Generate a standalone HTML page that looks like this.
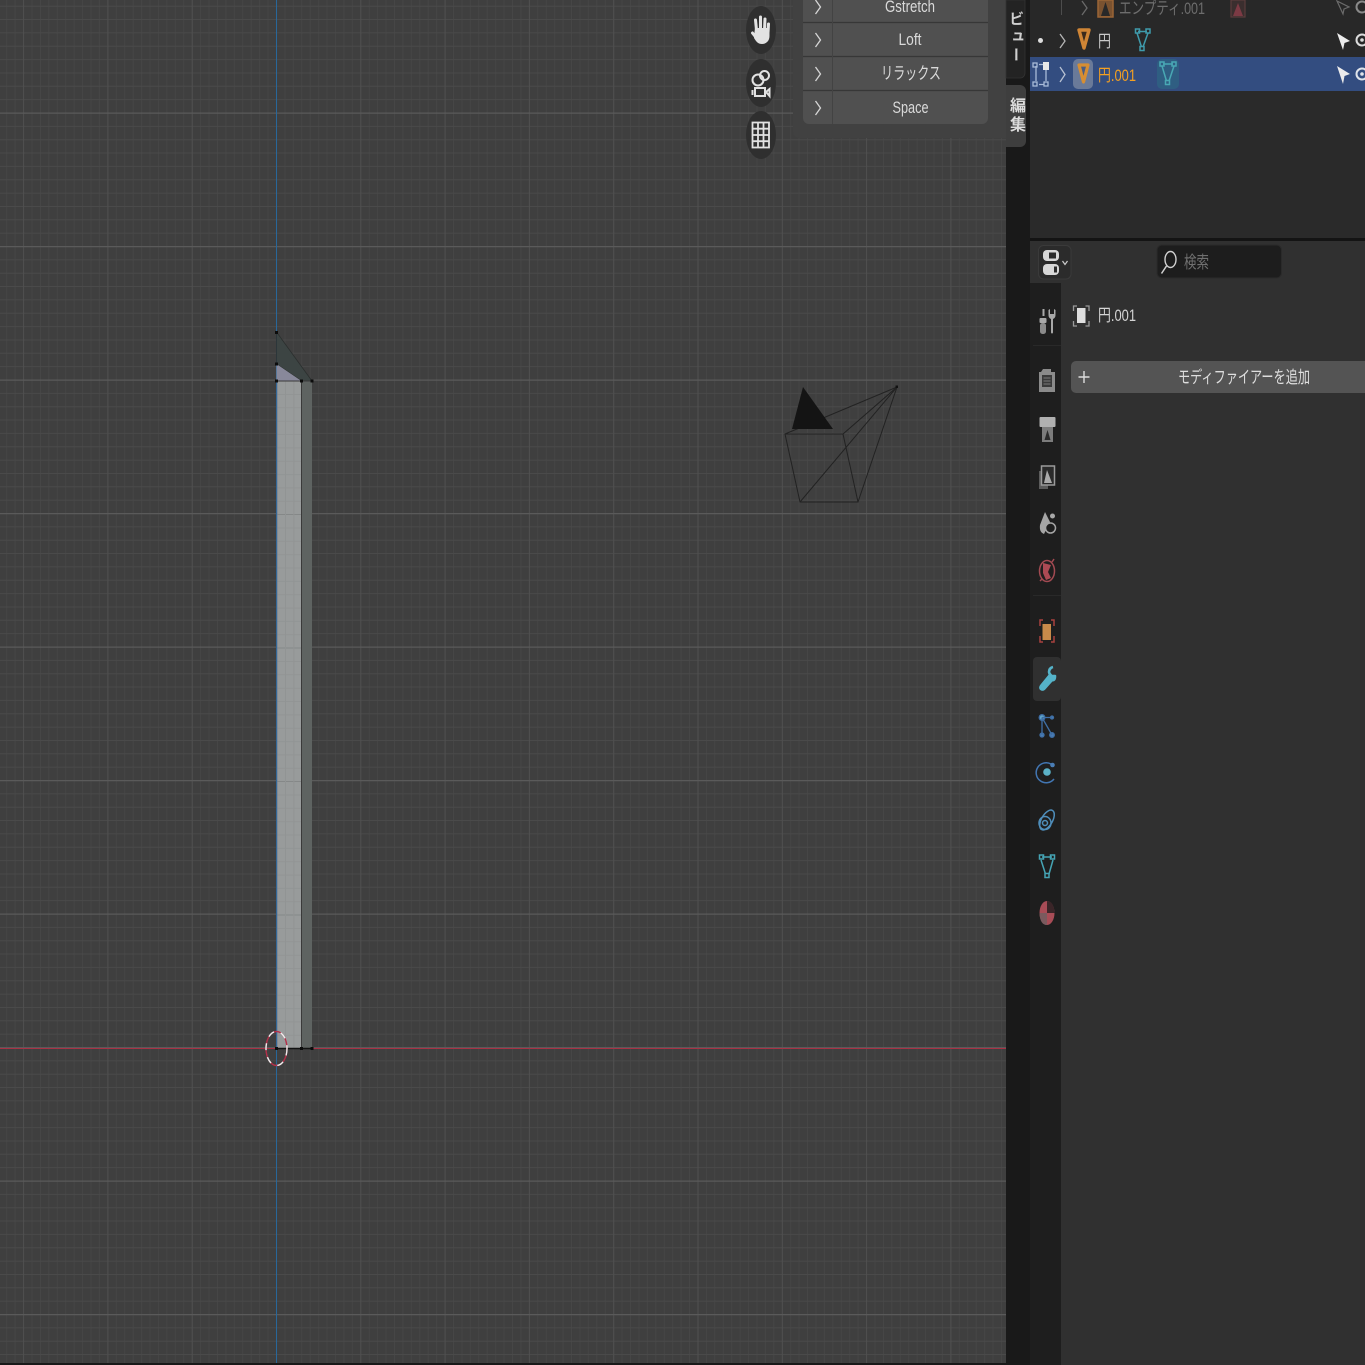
<!DOCTYPE html>
<html><head><meta charset="utf-8"><style>
html,body{margin:0;padding:0;background:#181818;width:1365px;height:1365px;overflow:hidden}
svg{display:block;filter:blur(.35px)}
text{font-family:"Liberation Sans","Noto Sans CJK JP",sans-serif;font-size:17px;fill:#dadada}
</style></head><body>
<svg width="1365" height="1365" viewBox="0 0 1365 1365" xmlns="http://www.w3.org/2000/svg">
<rect width="1365" height="1365" fill="#191919"/>
<!-- viewport -->
<rect width="1006" height="1363" fill="#3f3f3f"/>
<path d="M6.2 681.5H1006" stroke="#464646" stroke-width="1363" stroke-dasharray="1 7.43" fill="none"/>
<path d="M503 5.7V1363" stroke="#4a4a4a" stroke-width="1006" stroke-dasharray="1 12.35" fill="none"/>
<path d="M23.1 681.5H1006" stroke="#505050" stroke-width="1363" stroke-dasharray="1 83.3" fill="none"/>
<path d="M503 112.5V1363" stroke="#5a5a5a" stroke-width="1006" stroke-dasharray="1.200 132.300" fill="none"/>
<!-- axes -->
<path d="M276.500 0V1363" stroke="#28679a" stroke-width="1"/>
<path d="M0 1048.500H1006" stroke="#a83145" stroke-width="1"/>
<!-- object -->
<rect x="277" y="381" width="24.500" height="667" fill="#989b9b"/>
<rect x="301.500" y="381" width="10.500" height="667" fill="#5e6361"/>
<path d="M277 381V1048" stroke="#4d6a94" stroke-width="1" opacity=".6"/>
<path d="M277.500 394.500H301M277.500 407.800H301M277.500 421.200H301M277.500 434.500H301M277.500 447.900H301M277.500 461.200H301M277.500 474.600H301M277.500 487.900H301M277.500 501.300H301M277.500 528H301M277.500 541.300H301M277.500 554.700H301M277.500 568H301M277.500 581.400H301M277.500 594.700H301M277.500 608.100H301M277.500 621.400H301M277.500 634.800H301M277.500 661.500H301M277.500 674.800H301M277.500 688.200H301M277.500 701.500H301M277.500 714.900H301M277.500 728.200H301M277.500 741.600H301M277.500 754.900H301M277.500 768.300H301M277.500 795H301M277.500 808.300H301M277.500 821.700H301M277.500 835H301M277.500 848.400H301M277.500 861.700H301M277.500 875.100H301M277.500 888.400H301M277.500 901.800H301M277.500 928.500H301M277.500 941.800H301M277.500 955.200H301M277.500 968.500H301M277.500 981.900H301M277.500 995.200H301M277.500 1008.600H301M277.500 1021.900H301M277.500 1035.300H301" stroke="#909393" stroke-width="1" opacity=".7"/>
<path d="M277.500 514.500H301M277.500 648H301M277.500 781.500H301M277.500 915H301" stroke="#858888" stroke-width="1"/>
<path d="M285.500 381V1048M293.900 381V1048" stroke="#919494" stroke-width="1"/>
<path d="M276.500 332L312 381H301.500L276.500 364Z" fill="#3c4443" stroke="#2b2f2e" stroke-width=".8"/>
<path d="M276.500 364L301.500 381H276.500Z" fill="#88889a"/>
<path d="M301.500 381V1048M277 381H312" stroke="#3a3a3a" stroke-width="1" fill="none"/>
<path d="M276 1048.500H312" stroke="#111" stroke-width="1.400"/>
<g fill="#0c0c0c"><rect x="275" y="331" width="3" height="3"/><rect x="275" y="362.500" width="3" height="3"/><rect x="275" y="379.500" width="3" height="3"/><rect x="300" y="379.500" width="3" height="3"/><rect x="310.500" y="379.500" width="3" height="3"/><rect x="275" y="1047" width="3" height="3"/><rect x="300" y="1047" width="3" height="3"/><rect x="310.500" y="1047" width="3" height="3"/></g>
<!-- 3D cursor -->
<ellipse cx="276.500" cy="1048.500" rx="10.500" ry="17" fill="none" stroke="#b5304a" stroke-width="1.400"/>
<ellipse cx="276.500" cy="1048.500" rx="10.500" ry="17" fill="none" stroke="#eee" stroke-width="1.400" stroke-dasharray="7 7"/>
<!-- camera -->
<g fill="none" stroke="#222" stroke-width="1">
<path d="M785 434H843L858 502H800ZM897 387L785 434M897 387L843 434M897 387L858 502M897 387L800 502"/>
</g>
<path d="M803 387L792 429H833Z" fill="#141414"/>
<rect x="895.500" y="385.500" width="2.500" height="2.500" fill="#111"/>
<!-- N panel -->
<path d="M793 0H1006V138H799A6 6 0 0 1 793 132Z" fill="#414141"/>
<path d="M803 0H988V118A6 6 0 0 1 982 124H809A6 6 0 0 1 803 118Z" fill="#505050"/>
<path d="M803 22.500H988M803 56.500H988M803 90.500H988" stroke="#373737" stroke-width="1.200"/>
<path d="M832.500 0V124" stroke="#434343" stroke-width="1"/>
<g fill="none" stroke="#d6d6d6" stroke-width="1.300"><path d="M815.500 0L820.500 7L815.500 14M815.500 33L820.500 40L815.500 47M815.500 67L820.500 74L815.500 81M815.500 101L820.500 108L815.500 115"/></g>
<text x="885" y="12" textLength="50" lengthAdjust="spacingAndGlyphs">Gstretch</text>
<text x="898.500" y="45" textLength="23" lengthAdjust="spacingAndGlyphs">Loft</text>
<text x="881" y="79" textLength="60" lengthAdjust="spacingAndGlyphs">リラックス</text>
<text x="892.500" y="113" textLength="36" lengthAdjust="spacingAndGlyphs">Space</text>
<!-- nav gizmos -->
<g fill="#2f2f2f"><ellipse cx="761" cy="30" rx="15" ry="24"/><ellipse cx="761" cy="83" rx="15" ry="24"/><ellipse cx="761" cy="135" rx="15" ry="24"/></g>
<g stroke="#e2e2e2" fill="none" stroke-linecap="round">
<path d="M756.500 30L755.500 20M760.500 30V17M764.500 30L765 19M768 33L768.500 24" stroke-width="3"/>
<path d="M752.500 33L756.500 38" stroke-width="3"/>
</g>
<path d="M755 28H769.500V36C769.500 41 766 44 762 44C758 44 756.500 42 754 38L754.500 32Z" fill="#e2e2e2"/>
<g stroke="#e2e2e2" fill="none" stroke-width="2">
<circle cx="758" cy="80" r="5.500"/><circle cx="764.500" cy="75.500" r="4.500"/>
<rect x="755" y="88" width="10" height="8"/><path d="M766 92L769.500 89V96Z"/>
<path d="M752.500 90V95"/>
</g>
<g stroke="#e2e2e2" fill="none" stroke-width="1.800"><rect x="752.500" y="122.500" width="16.500" height="25"/><path d="M758 122.500V147.500M763.500 122.500V147.500M752.500 128.700H769M752.500 135H769M752.500 141.200H769"/></g>
<!-- vertical tabs -->
<rect x="1006" y="0" width="24" height="1365" fill="#191919"/>
<path d="M1006 0H1025V73A5 5 0 0 1 1020 78H1006Z" fill="#232323" stroke="#333" stroke-width=".8"/>
<path d="M1006 85H1020A6 6 0 0 1 1026 91V141A6 6 0 0 1 1020 147H1006Z" fill="#3e3e3e"/>
<text x="1015.500" y="11" writing-mode="vertical-rl" style="font-size:15px;letter-spacing:3px;fill:#cfcfcf;font-weight:bold">ビュー</text>
<text x="1015.500" y="97" writing-mode="vertical-rl" style="font-size:16px;letter-spacing:3px;fill:#dcdcdc;font-weight:bold">編集</text>
<!-- outliner -->
<rect x="1030" y="0" width="335" height="238" fill="#2a2a2a"/>
<rect x="1030" y="0" width="335" height="57" fill="#282828"/>
<rect x="1030" y="57" width="335" height="34" fill="#334d80"/>
<rect x="1030" y="238" width="335" height="3" fill="#141414"/>
<path d="M1061.500 0V15" stroke="#4d4d4d"/>
<path d="M1082 1L1087 8L1082 15" fill="none" stroke="#6a6a6a" stroke-width="1.300"/>
<rect x="1098" y="0" width="15" height="17" fill="#7a5230" stroke="#9a6436" stroke-width="1.500"/>
<path d="M1105.500 2L1101 16H1110Z" fill="#282828"/>
<text x="1119" y="14" textLength="86" lengthAdjust="spacingAndGlyphs" style="fill:#6d6d6d">エンプティ.001</text>
<rect x="1231" y="0" width="14" height="17" fill="#3a2e2e" stroke="#5a3c3c" stroke-width="1.200"/>
<path d="M1238 3L1233 16H1243Z" fill="#7c3a44"/>
<path d="M1337 1L1349 7L1344 9L1343 14Z" fill="none" stroke="#6b6b6b" stroke-width="1.200"/>
<circle cx="1362" cy="7" r="5.500" fill="none" stroke="#8a8a8a" stroke-width="2"/>
<circle cx="1040.500" cy="40.500" r="2.500" fill="#ddd"/>
<path d="M1060 34L1065 41L1060 48" fill="none" stroke="#b5b5b5" stroke-width="1.300"/>
<path d="M1079 30H1089L1084 48Z" fill="#3a2a1c" stroke="#cf8535" stroke-width="3.400" stroke-linejoin="round"/>
<text x="1098" y="47" textLength="13" lengthAdjust="spacingAndGlyphs" style="fill:#c8c8c8">円</text>
<g fill="none" stroke="#3f9bac" stroke-width="1.500"><path d="M1138 31.500H1147M1137 33L1141.500 47M1148 33L1143 47"/><rect x="1135.500" y="29" width="4" height="4"/><rect x="1146" y="29" width="4" height="4"/><rect x="1140" y="46.500" width="4" height="4"/></g>
<path d="M1337 33L1350 41L1344.500 43L1343 50Z" fill="#ececec"/>
<circle cx="1362" cy="40" r="5.500" fill="none" stroke="#dcdcdc" stroke-width="2"/><circle cx="1362" cy="40" r="1.800" fill="#dcdcdc"/>
<g fill="none" stroke="#a8bbd8" stroke-width="1.300"><path d="M1036 66V81M1039 64.500H1043M1039 84.500H1044M1046 70V81"/><rect x="1033" y="63" width="4" height="4"/><rect x="1033" y="82" width="4" height="4"/><rect x="1044" y="82" width="4" height="4"/></g>
<rect x="1043" y="62" width="6" height="8" fill="#e8e8e8"/>
<path d="M1060 67L1065 74.500L1060 82" fill="none" stroke="#b7c1d2" stroke-width="1.300"/>
<rect x="1073" y="59" width="20" height="30" rx="5" fill="#6a7a99"/>
<path d="M1079 65H1088L1083.500 82Z" fill="#4a5c80" stroke="#d68e33" stroke-width="3.200" stroke-linejoin="round"/>
<text x="1098" y="81" textLength="38" lengthAdjust="spacingAndGlyphs" style="fill:#f5a021">円.001</text>
<rect x="1157" y="59" width="22" height="30" rx="5" fill="#2f5e82"/>
<g fill="none" stroke="#49a8b4" stroke-width="1.500"><path d="M1163 64H1173M1162 66L1166.500 81M1174 66L1169 81"/><rect x="1160" y="62" width="4" height="4"/><rect x="1172" y="62" width="4" height="4"/><rect x="1165.500" y="80.500" width="4" height="4"/></g>
<path d="M1337 66L1350 74L1344.500 76L1343 84Z" fill="#ececec"/>
<circle cx="1362" cy="74" r="5.500" fill="none" stroke="#e0e4ea" stroke-width="2"/><circle cx="1362" cy="74" r="1.800" fill="#e0e4ea"/>
<!-- properties -->
<rect x="1030" y="241" width="335" height="1124" fill="#303030"/>
<rect x="1030" y="283" width="31" height="1082" fill="#1e1e1e"/>
<rect x="1033" y="657" width="28" height="44" rx="4" fill="#303030"/>
<path d="M1033 345.500H1061M1033 595.500H1061" stroke="#292929"/>
<rect x="1038.500" y="245.500" width="32.500" height="33.500" rx="5" fill="#2b2b2b" stroke="#3a3a3a"/>
<rect x="1043" y="250" width="16" height="11" rx="4" fill="#d8d8d8"/><rect x="1049" y="252.500" width="7" height="6" fill="#2b2b2b"/>
<rect x="1043" y="264" width="16" height="11" rx="4" fill="#d8d8d8"/><rect x="1054" y="266.500" width="3" height="6" fill="#2b2b2b"/>
<path d="M1062.500 261L1065 264.500L1067.500 261" fill="none" stroke="#ccc" stroke-width="1.200"/>
<rect x="1157" y="245" width="124.500" height="33" rx="5" fill="#1d1d1d" stroke="#2a2a2a"/>
<ellipse cx="1170.500" cy="259.500" rx="5.500" ry="8" fill="none" stroke="#d0d0d0" stroke-width="1.400"/>
<path d="M1166.500 266L1161.500 273.500" stroke="#d0d0d0" stroke-width="1.500"/>
<text x="1184" y="268" textLength="25" lengthAdjust="spacingAndGlyphs" style="fill:#707070">検索</text>
<path d="M1077 306H1073.500V311M1085.500 306H1089V311M1077 326H1073.500V321M1085.500 326H1089V321" fill="none" stroke="#9a9a9a" stroke-width="1.300"/>
<rect x="1077" y="308" width="8.500" height="15" fill="#dedede"/>
<text x="1098" y="321" textLength="38" lengthAdjust="spacingAndGlyphs" style="fill:#d4d4d4">円.001</text>
<rect x="1071" y="361" width="300" height="32" rx="5" fill="#545454"/>
<path d="M1084 371V383M1078.500 377H1089.500" stroke="#dcdcdc" stroke-width="1.400"/>
<text x="1178" y="383" textLength="132" lengthAdjust="spacingAndGlyphs" style="fill:#dedede">モディファイアーを追加</text>
<!-- tab icons -->
<g fill="#a8a8a8" stroke="none">
<rect x="1042.500" y="309" width="2" height="7"/><rect x="1039.500" y="318" width="7" height="5" rx="1"/><rect x="1040" y="323" width="6" height="11" rx="2.500" fill="#8a8a8a"/>
<path d="M1048.500 310V315Q1048.500 318 1051 319V332.500A1 1 0 0 0 1053 332.500V319Q1055.500 318 1055.500 315V310L1054 309V314H1050V309Z"/>
<path d="M1041 372L1043 369H1051V372H1055V392H1039V372Z" fill="#8a8a8a"/><rect x="1042" y="375" width="10" height="12" fill="#3a3a3a"/><path d="M1043.500 378H1050.500M1043.500 381H1050.500M1043.500 384H1050.500" stroke="#7a7a7a"/>
<rect x="1039.500" y="417" width="16" height="10" rx="1" fill="#b0b0b0"/><rect x="1042" y="427" width="11" height="15" fill="#7c7c7c"/><path d="M1047.500 430L1044.500 440H1050.500Z" fill="#2a2a2a"/>
<rect x="1039" y="471" width="9" height="18" fill="#5c5c5c"/><rect x="1041.500" y="466" width="13" height="19" fill="#2a2a2a" stroke="#9a9a9a" stroke-width="1.500"/><path d="M1047 470L1044 483H1052Z" fill="#aaa"/>
<path d="M1045 512L1050 522L1044 534Q1039 532 1040 525Z" fill="#a5a5a5"/><circle cx="1052.500" cy="516" r="2.500"/><circle cx="1050.500" cy="528" r="5" fill="#1e1e1e" stroke="#a5a5a5" stroke-width="1.500"/>
</g>
<g fill="none" stroke="#a34a52" stroke-width="1.500"><ellipse cx="1047" cy="571" rx="7.500" ry="10.500"/><path d="M1040 581L1042 579M1052 562L1054 559"/></g>
<path d="M1043 563L1051 565L1048 572L1051 578L1046 580L1043 573Z" fill="#ab4a54"/>
<path d="M1043 620H1040V626M1051 620H1054V626M1043 642H1040V636M1051 642H1054V636" fill="none" stroke="#a8403f" stroke-width="1.500"/>
<rect x="1042.500" y="624" width="8.500" height="16" fill="#c88a4a"/>
<path d="M1053 667Q1049 668 1049 672L1050 675L1041 686A2 2 0 0 0 1044 689L1052 680Q1055 681 1055 676L1051.500 676L1049 673" fill="#55b3c9" stroke="#55b3c9" stroke-width="2.600" stroke-linejoin="round"/>
<g fill="#4a7db5" stroke="#3f6fa5" stroke-width="1.300"><circle cx="1042" cy="717.500" r="2.800" fill="#5fa6c9"/><circle cx="1042" cy="735" r="2"/><circle cx="1052" cy="735" r="2.300"/><circle cx="1052" cy="717.500" r="1.500"/><path d="M1042 717.500H1052M1042 717.500V735M1042 717.500L1052 735" fill="none"/></g>
<circle cx="1047" cy="772" r="3.800" fill="#5bb1c6"/><path d="M1051 764A10 10 0 1 0 1054 779" fill="none" stroke="#4276b3" stroke-width="1.500"/><circle cx="1052.500" cy="765" r="2.300" fill="#4a7db5"/>
<g fill="none" stroke="#4f8ebb" stroke-width="1.500"><ellipse cx="1047" cy="820" rx="5.500" ry="11" transform="rotate(30 1047 820)"/><ellipse cx="1045" cy="823" rx="6" ry="6.500"/><circle cx="1045" cy="823" r="2.500"/></g>
<g fill="none" stroke="#45a4b4" stroke-width="1.500"><path d="M1042 857H1052M1041 860L1045.500 874M1053 860L1049 874"/><rect x="1039.500" y="855" width="4" height="4"/><rect x="1050.500" y="855" width="4" height="4"/><rect x="1045" y="873.500" width="4" height="4"/></g>
<ellipse cx="1047" cy="913" rx="7.500" ry="12" fill="#a84c56"/><path d="M1047 913H1039.500Q1040 925 1047 925Z" fill="#7a5a5e"/><path d="M1047 913H1054.500Q1054 901 1047 901Z" fill="#3a2528"/>
</svg>
</body></html>
